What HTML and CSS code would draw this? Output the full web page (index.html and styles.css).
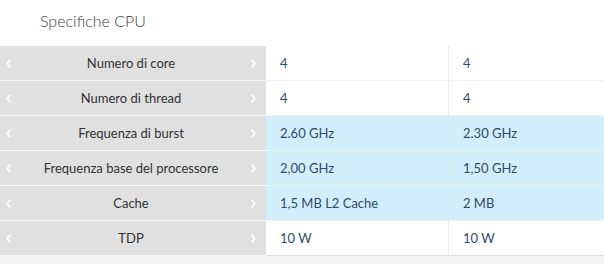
FILE: index.html
```html
<!DOCTYPE html>
<html lang="it">
<head>
<meta charset="utf-8">
<title>Specifiche CPU</title>
<link rel="stylesheet" href="styles.css">
</head>
<body>
  <section class="specs">
    <h2 class="specs-title">Specifiche CPU</h2>
    <div class="spec-table">
      <div class="spec-row">
        <div class="spec-label"><svg class="chev" viewBox="0 0 5 9"><polyline points="4,1 1.2,4.5 4,8"/></svg><span class="label-text">Numero di core</span><svg class="chev" viewBox="0 0 5 9"><polyline points="1,1 3.8,4.5 1,8"/></svg></div>
        <div class="spec-value">4</div>
        <div class="spec-value">4</div>
      </div>
      <div class="spec-row">
        <div class="spec-label"><svg class="chev" viewBox="0 0 5 9"><polyline points="4,1 1.2,4.5 4,8"/></svg><span class="label-text">Numero di thread</span><svg class="chev" viewBox="0 0 5 9"><polyline points="1,1 3.8,4.5 1,8"/></svg></div>
        <div class="spec-value">4</div>
        <div class="spec-value">4</div>
      </div>
      <div class="spec-row diff">
        <div class="spec-label"><svg class="chev" viewBox="0 0 5 9"><polyline points="4,1 1.2,4.5 4,8"/></svg><span class="label-text">Frequenza di burst</span><svg class="chev" viewBox="0 0 5 9"><polyline points="1,1 3.8,4.5 1,8"/></svg></div>
        <div class="spec-value">2.60 GHz</div>
        <div class="spec-value">2.30 GHz</div>
      </div>
      <div class="spec-row diff">
        <div class="spec-label"><svg class="chev" viewBox="0 0 5 9"><polyline points="4,1 1.2,4.5 4,8"/></svg><span class="label-text">Frequenza base del processore</span><svg class="chev" viewBox="0 0 5 9"><polyline points="1,1 3.8,4.5 1,8"/></svg></div>
        <div class="spec-value">2,00 GHz</div>
        <div class="spec-value">1,50 GHz</div>
      </div>
      <div class="spec-row diff">
        <div class="spec-label"><svg class="chev" viewBox="0 0 5 9"><polyline points="4,1 1.2,4.5 4,8"/></svg><span class="label-text">Cache</span><svg class="chev" viewBox="0 0 5 9"><polyline points="1,1 3.8,4.5 1,8"/></svg></div>
        <div class="spec-value">1,5 MB L2 Cache</div>
        <div class="spec-value">2 MB</div>
      </div>
      <div class="spec-row">
        <div class="spec-label"><svg class="chev" viewBox="0 0 5 9"><polyline points="4,1 1.2,4.5 4,8"/></svg><span class="label-text">TDP</span><svg class="chev" viewBox="0 0 5 9"><polyline points="1,1 3.8,4.5 1,8"/></svg></div>
        <div class="spec-value">10 W</div>
        <div class="spec-value">10 W</div>
      </div>
    </div>
  </section>
  <div class="page-foot"></div>
</body>
</html>
```

FILE: styles.css
```css
html, body {
  margin: 0;
  padding: 0;
  background: #f4f4f4;
}

.specs {
  background: #ffffff;
}

.specs-title {
  margin: 0;
  height: 46px;
  box-sizing: border-box;
  padding: 10px 0 0 40px;
  font-family: "Lato", sans-serif;
  font-weight: 300;
  font-size: 16px;
  line-height: 22px;
  color: #3f3f3f;
}

.spec-table {
  display: flex;
  flex-direction: column;
  border-bottom: 1px solid #dcdcdc;
}

.spec-row {
  display: grid;
  grid-template-columns: 266px 182px 1fr;
  height: 35px;
  box-sizing: border-box;
  border-bottom: 1px solid #f0f0f0;
}

.spec-row:last-child {
  border-bottom: none;
  height: 34px;
}

.spec-label {
  display: flex;
  align-items: center;
  background: #e0e0e0;
  border-bottom: 1px solid #f6f6f6;
  margin-bottom: -1px;
  padding: 0 10px 0 6px;
  font-family: "Lato", sans-serif;
  font-size: 13px;
  color: #333333;
}

.label-text {
  flex: 1;
  text-align: center;
}

.chev {
  width: 5px;
  height: 9px;
  flex: none;
  fill: none;
  stroke: #ffffff;
  stroke-width: 1.6;
  stroke-linecap: round;
  stroke-linejoin: round;
}

.spec-value {
  display: flex;
  align-items: center;
  padding-left: 14px;
  font-family: "Lato", sans-serif;
  font-size: 13px;
  color: #2f4a6c;
}

.spec-value + .spec-value {
  border-left: 1px dotted #e2e2e2;
}

.spec-row.diff .spec-value {
  background: #d2eefb;
}

.page-foot {
  height: 6px;
}
```
